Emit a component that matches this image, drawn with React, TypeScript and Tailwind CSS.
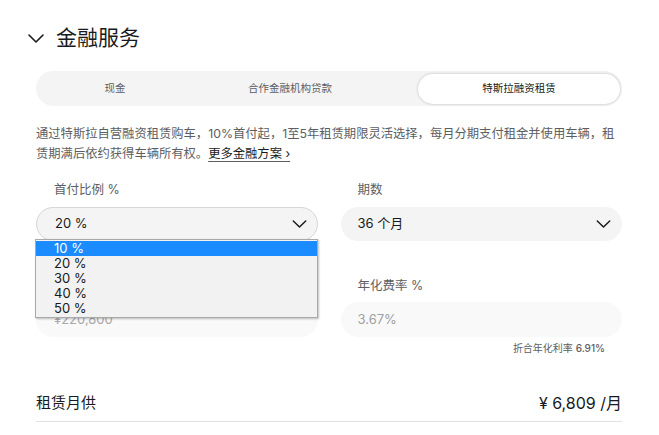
import React from 'react';

const font = { fontFamily: 'Inter, "Noto Sans CJK SC", sans-serif' };

function Chevron({ className }: { className?: string }) {
  return (
    <svg viewBox="0 0 16 9" className={className} fill="none" stroke="currentColor" strokeWidth="1.6" strokeLinecap="round" strokeLinejoin="round">
      <path d="M1 1l7 7 7-7" />
    </svg>
  );
}

const options = ['10 %', '20 %', '30 %', '40 %', '50 %'];

export default function App() {
  return (
    <div className="min-h-screen bg-white px-[36px] pr-[37px] pt-[24px] text-[#171a20]" style={font}>
      {/* header */}
      <div className="flex items-center gap-[12px] -ml-[8px] h-[28px]">
        <Chevron className="w-[16px] h-[9px] text-[#171a20]" />
        <h2 className="text-[21px] leading-[28px] text-[#171a20]">金融服务</h2>
      </div>

      {/* tabs */}
      <div className="mt-[19px] flex h-[35px] items-center rounded-full bg-[#f4f4f4] p-[3px] pr-[2px]">
        <button className="w-[152px] text-[10.5px] text-[#5c5e62]">现金</button>
        <button className="w-[198px] text-[10.5px] text-[#5c5e62]">合作金融机构贷款</button>
        <button className="ml-auto h-[30px] w-[202px] rounded-full bg-white text-[10.5px] text-[#171a20] shadow-[0_0_3px_rgba(0,0,0,0.22)]">
          特斯拉融资租赁
        </button>
      </div>

      <p className="mt-[18px] text-[12.3px] leading-[20px] text-[#5c5e62]">
        通过特斯拉自营融资租赁购车，10%首付起，1至5年租赁期限灵活选择，每月分期支付租金并使用车辆，租赁期满后依约获得车辆所有权。
        <a className="text-[#171a20] underline underline-offset-[3px] decoration-[#5c5e62]">更多金融方案 ›</a>
      </p>

      {/* form */}
      <div className="mt-[16px] grid grid-cols-2 gap-x-[23px]">
        <div className="relative">
          <div className="pl-[18px] text-[12.5px] leading-[20px] text-[#5c5e62]">首付比例 %</div>
          <div className="mt-[7px] flex h-[34px] items-center justify-between rounded-full border border-[#d6d6d6] bg-[#f4f4f4] pl-[18px] pr-[10px]">
            <span className="text-[13px] text-[#171a20]">20 %</span>
            <Chevron className="w-[15px] h-[8px] text-[#171a20]" />
          </div>

          <div className="mt-[35px] pl-[18px] text-[12.5px] leading-[20px] text-[#5c5e62]">车辆价格</div>
          <div className="mt-[6px] flex h-[35px] items-center rounded-full bg-[#f9f9f9] pl-[18px]">
            <span className="text-[13px] text-[#aaaaaa]">¥220,800</span>
          </div>

          {/* open dropdown */}
          <ul className="absolute left-[-1px] top-[59px] w-[283px] border border-[#a9a9a9] bg-[#f2f2f2] py-[1px] shadow-[1px_1px_2px_rgba(0,0,0,0.25)]">
            {options.map((o, i) => (
              <li
                key={o}
                className={`h-[15px] pl-[18px] text-[13px] leading-[15px] ${i === 0 ? 'bg-[#1a8cff] text-white' : 'text-[#171a20]'}`}
              >
                {o}
              </li>
            ))}
          </ul>
        </div>

        <div>
          <div className="pl-[17px] text-[12.5px] leading-[20px] text-[#5c5e62]">期数</div>
          <div className="mt-[7px] flex h-[34px] items-center justify-between rounded-full bg-[#f4f4f4] pl-[17px] pr-[11px]">
            <span className="text-[13px] text-[#171a20]">36 个月</span>
            <Chevron className="w-[15px] h-[8px] text-[#171a20]" />
          </div>

          <div className="mt-[35px] pl-[17px] text-[12.5px] leading-[20px] text-[#5c5e62]">年化费率 %</div>
          <div className="mt-[6px] flex h-[35px] items-center rounded-full bg-[#f9f9f9] pl-[17px]">
            <span className="text-[13px] text-[#a0a0a0]">3.67%</span>
          </div>
          <div className="mt-[4px] pr-[17px] text-right text-[10px] leading-[14px] text-[#5c5e62]">
            折合年化利率 <span className="font-medium">6.91%</span>
          </div>
        </div>
      </div>

      {/* monthly */}
      <div className="mt-[36px] flex items-center justify-between border-b border-[#e2e2e2] pb-[6px]">
        <span className="text-[15px] leading-[24px] text-[#171a20]">租赁月供</span>
        <span className="text-[16px] leading-[24px] text-[#171a20]">¥ 6,809 /月</span>
      </div>
    </div>
  );
}
